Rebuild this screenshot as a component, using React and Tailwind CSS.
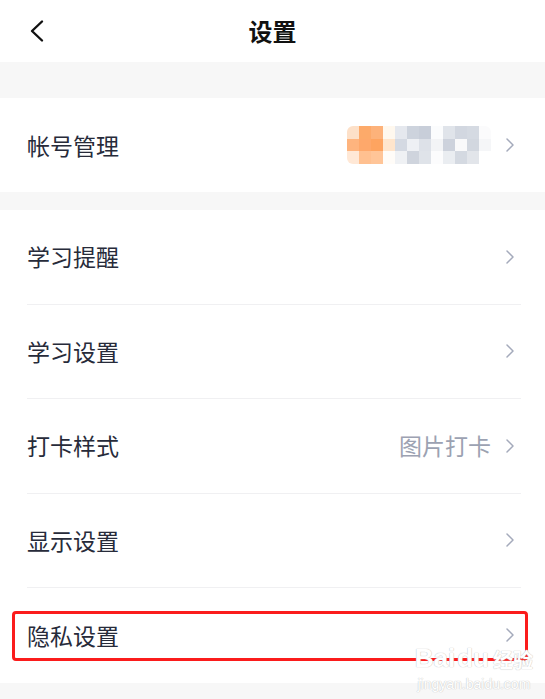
import React from "react";

const font = { fontFamily: '"Noto Sans CJK SC", "Noto Sans", sans-serif' };

function Chevron({ className = "" }) {
  return (
    <svg width="10" height="16" viewBox="0 0 10 16" className={className}>
      <path d="M2 2 L8 8 L2 14" fill="none" stroke="#a4aabb" strokeWidth="1.5" strokeLinecap="round" strokeLinejoin="round" />
    </svg>
  );
}

function Blur() {
  const rows = [
    ["bg-[#fde0c8]", "bg-[#fdaa6a]", "bg-[#fdb27a]", "bg-[#fff8ee]", "bg-[#e5e8ee]", "bg-[#cdd3dd]", "bg-[#c8ced9]", "bg-[#fbfcfd]", "bg-[#e0e4ea]", "bg-[#d2d7e0]", "bg-[#d5dae2]", "bg-[#fbfbfc]"],
    ["bg-[#feb47e]", "bg-[#fea86b]", "bg-[#fea460]", "bg-[#ffe5cc]", "bg-[#d4d9e2]", "bg-[#eef0f4]", "bg-[#dde1e8]", "bg-[#f3f4f6]", "bg-[#cdd2dc]", "bg-[#f9f9fa]", "bg-[#d2d7df]", "bg-[#f5f6f8]"],
    ["bg-[#ffe8d6]", "bg-[#ffc090]", "bg-[#ffc598]", "bg-[#fffcf8]", "bg-[#eff1f4]", "bg-[#cfd4dd]", "bg-[#dfe3e9]", "bg-[#fcfcfd]", "bg-[#eaedf1]", "bg-[#d4d9e1]", "bg-[#e2e5ea]", "bg-[#ffffff]"],
  ];
  return (
    <div className="grid grid-cols-[repeat(12,12px)] grid-rows-[repeat(3,12.5px)] rounded-[6px] overflow-hidden">
      {rows.flat().map((c, i) => (
        <div key={i} className={c} />
      ))}
    </div>
  );
}

function Row({ label, value, last, children }) {
  return (
    <div className="relative h-[94.5px] pl-[27px] pr-[24px]">
      <div className={`h-full flex items-center justify-between ${last ? "" : "border-b border-[#f0f0f2]"}`}>
        <span className="text-[23px] text-[#272b3a] leading-none">{label}</span>
        <div className="flex items-center gap-[14px] mr-[6px]">
          {value && <span className="text-[23px] text-[#9ca2b2] leading-none">{value}</span>}
          <Chevron />
        </div>
      </div>
      {children}
    </div>
  );
}

export default function App() {
  return (
    <div className="w-[545px] h-[699px] bg-[#f7f7f7] overflow-hidden relative" style={font}>
      <div className="h-[62px] bg-white grid grid-cols-[1fr_auto_1fr] items-center">
        <div className="pl-[28px] flex items-center">
          <svg width="18" height="24" viewBox="0 0 18 24">
            <path d="M14 2.5 L4 12 L14 21.5" fill="none" stroke="#111" strokeWidth="2.4" strokeLinecap="round" strokeLinejoin="round" />
          </svg>
        </div>
        <div className="text-[24px] font-bold text-[#111] leading-none">设置</div>
        <div />
      </div>
      <div className="h-[36px]" />
      <div className="bg-white h-[94px] pl-[27px] pr-[24px] flex items-center justify-between">
        <span className="text-[23px] text-[#272b3a] leading-none">帐号管理</span>
        <div className="flex items-center gap-[14px] mr-[6px]">
          <Blur />
          <Chevron />
        </div>
      </div>
      <div className="h-[18px]" />
      <div className="bg-white">
        <Row label="学习提醒" />
        <Row label="学习设置" />
        <Row label="打卡样式" value="图片打卡" />
        <Row label="显示设置" />
        <Row label="隐私设置" last>
          <div className="absolute left-[12px] right-[17px] top-[23px] h-[50px] border-[3px] border-[#fb1c1c] rounded-[4px]" />
        </Row>
      </div>
      <div className="absolute right-[12px] bottom-[8px] flex flex-col items-center pointer-events-none">
        <div className="flex items-end gap-[2px] text-[26px] leading-none font-bold text-[#ffffff]" style={{ fontFamily: '"Liberation Sans", "Noto Sans CJK SC", sans-serif', textShadow: "0 0 1px #c8c8c8, 0 0 1px #c8c8c8" }}>
          <span>Bai</span>
          <span>du</span>
          <span className="text-[20px] ml-[2px]">经验</span>
        </div>
        <div className="text-[14px] leading-none mt-[6px] text-[#ffffff]" style={{ fontFamily: '"Liberation Sans", sans-serif', textShadow: "0 0 1px #c8c8c8, 0 0 1px #c8c8c8" }}>
          jingyan.baidu.com
        </div>
      </div>
    </div>
  );
}
